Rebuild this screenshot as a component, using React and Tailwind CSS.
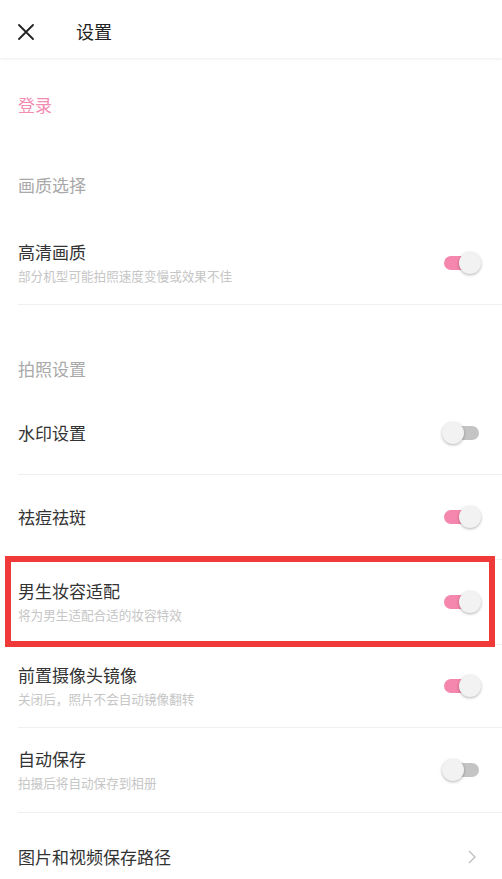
import { useState } from "react";

const font = { fontFamily: '"Noto Sans CJK SC", "Noto Sans", sans-serif' };

function Toggle({ on }) {
  return (
    <div className="relative w-[40px] h-[24px] flex items-center shrink-0">
      <div className={`absolute left-[2px] right-[3px] h-[14px] rounded-full ${on ? "bg-[#f586ad]" : "bg-[#c4c4c4]"}`}></div>
      <div
        className={`absolute top-[1px] w-[22px] h-[22px] rounded-full bg-[#f2f2f2] shadow-[0_1px_3px_rgba(0,0,0,0.3)] ${on ? "right-[1px]" : "left-0"}`}
      ></div>
    </div>
  );
}

function Row({ title, sub, on, h = "h-[84px]", last }) {
  return (
    <div className={`${h} ml-[18px] pr-[20px] flex items-center justify-between ${last ? "" : "border-b border-[#efefef]"}`}>
      <div className="flex flex-col">
        <span className="text-[17px] leading-[22px] text-[#333333]">{title}</span>
        {sub && <span className="mt-[4px] text-[12.6px] leading-[18px] text-[#c6c6c6]">{sub}</span>}
      </div>
      {on !== undefined && <Toggle on={on} />}
    </div>
  );
}

export default function App() {
  const [settings] = useState({
    hd: true,
    watermark: false,
    acne: true,
    male: true,
    mirror: true,
    autosave: false,
  });

  return (
    <div className="w-[502px] h-[879px] bg-white overflow-hidden relative" style={font}>
      {/* header */}
      <div className="h-[58px] flex items-center px-[18px] pt-[5px] shadow-[0_1px_3px_rgba(0,0,0,0.08)] relative z-10 bg-white">
        <svg width="16" height="16" viewBox="0 0 16 16">
          <path d="M1 1 L15 15 M15 1 L1 15" stroke="#222" strokeWidth="1.8" strokeLinecap="round" />
        </svg>
        <span className="ml-[42px] text-[18px] text-[#222]">设置</span>
      </div>

      {/* login */}
      <div className="h-[94px] flex items-center px-[18px]">
        <span className="text-[17px] text-[#f28cb1]">登录</span>
      </div>

      <div className="h-[69px] pt-[22px] px-[18px]">
        <span className="text-[17px] leading-[22px] text-[#a9a9a9] block">画质选择</span>
      </div>
      <Row title="高清画质" sub="部分机型可能拍照速度变慢或效果不佳" on={settings.hd} />

      <div className="h-[86px] pt-[53px] px-[18px]">
        <span className="text-[17px] leading-[22px] text-[#a9a9a9] block">拍照设置</span>
      </div>
      <Row title="水印设置" on={settings.watermark} />
      <Row title="祛痘祛斑" on={settings.acne} h="h-[85px]" />
      <Row title="男生妆容适配" sub="将为男生适配合适的妆容特效" on={settings.male} h="h-[85px]" />
      <Row title="前置摄像头镜像" sub="关闭后，照片不会自动镜像翻转" on={settings.mirror} h="h-[83px]" />
      <Row title="自动保存" sub="拍摄后将自动保存到相册" on={settings.autosave} h="h-[85px]" />

      <div className="h-[88px] ml-[18px] pr-[26px] flex items-center justify-between">
        <span className="text-[17px] leading-[22px] text-[#333333]">图片和视频保存路径</span>
        <svg width="8" height="14" viewBox="0 0 8 14">
          <path d="M1 1 L7 7 L1 13" fill="none" stroke="#bdbdbd" strokeWidth="1.3" />
        </svg>
      </div>

      {/* highlight annotation */}
      <div className="absolute left-[5px] top-[556px] w-[490px] h-[91px] border-[6px] border-[#f03a3a] pointer-events-none"></div>
    </div>
  );
}
